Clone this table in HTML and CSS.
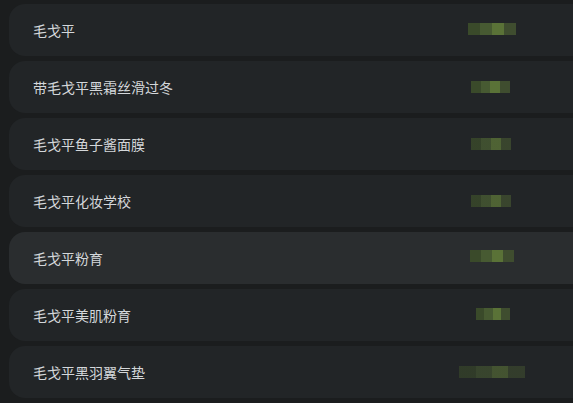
FILE: index.html
```html
<!DOCTYPE html>
<html lang="zh-CN">
<head>
  <meta charset="UTF-8">
  <title>搜索建议</title>
  <link rel="stylesheet" href="styles.css">
</head>
<body>

<ul class="suggest-list">
  <li class="suggest-item">
    <span class="label">毛戈平</span>
    <span class="blur blur-a"></span>
  </li>
  <li class="suggest-item">
    <span class="label">带毛戈平黑霜丝滑过冬</span>
    <span class="blur blur-b"></span>
  </li>
  <li class="suggest-item">
    <span class="label">毛戈平鱼子酱面膜</span>
    <span class="blur blur-c"></span>
  </li>
  <li class="suggest-item">
    <span class="label">毛戈平化妆学校</span>
    <span class="blur blur-c"></span>
  </li>
  <li class="suggest-item active">
    <span class="label">毛戈平粉育</span>
    <span class="blur blur-d"></span>
  </li>
  <li class="suggest-item">
    <span class="label">毛戈平美肌粉育</span>
    <span class="blur blur-e"></span>
  </li>
  <li class="suggest-item">
    <span class="label">毛戈平黑羽翼气垫</span>
    <span class="blur blur-f"></span>
  </li>
</ul>

</body>
</html>
```

FILE: styles.css
```css
body {
  margin: 0;
  background-color: #1b1d1e;
  font-family: "Noto Sans CJK SC", "Noto Sans", sans-serif;
  overflow: hidden;
}

.suggest-list {
  list-style: none;
  margin: 0;
  padding: 4px 0 0 9px;
  display: flex;
  flex-direction: column;
  gap: 5px;
}

/* rows run past the right edge, so only the left corners are rounded */
.suggest-item {
  height: 52px;
  display: grid;
  grid-template-columns: 426px 1fr;
  align-items: center;
  padding-left: 24px;
  background-color: #222527;
  border-radius: 16px 0 0 16px;
}

.suggest-item.active {
  background-color: #2a2d2f;
}

.label {
  color: #d4d7da;
  font-size: 14px;
  line-height: 20px;
}

.blur {
  display: block;
  height: 12px;
  background: linear-gradient(90deg, #3a4a2a 0 25%, #475a32 25% 50%, #5a7237 50% 75%, #3f4d2f 75% 100%);
}

.blur-a { width: 48px; margin-left: 9px; margin-top: -2px; }
.blur-b { width: 39px; margin-left: 12px; }
.blur-c { width: 40px; margin-left: 12px; opacity: 0.8; }
.blur-d { width: 44px; margin-left: 11px; margin-top: -4px; }
.blur-e { width: 34px; margin-left: 17px; margin-top: -3px; }
.blur-f { width: 66px; margin-left: 0; opacity: 0.6; }
```
